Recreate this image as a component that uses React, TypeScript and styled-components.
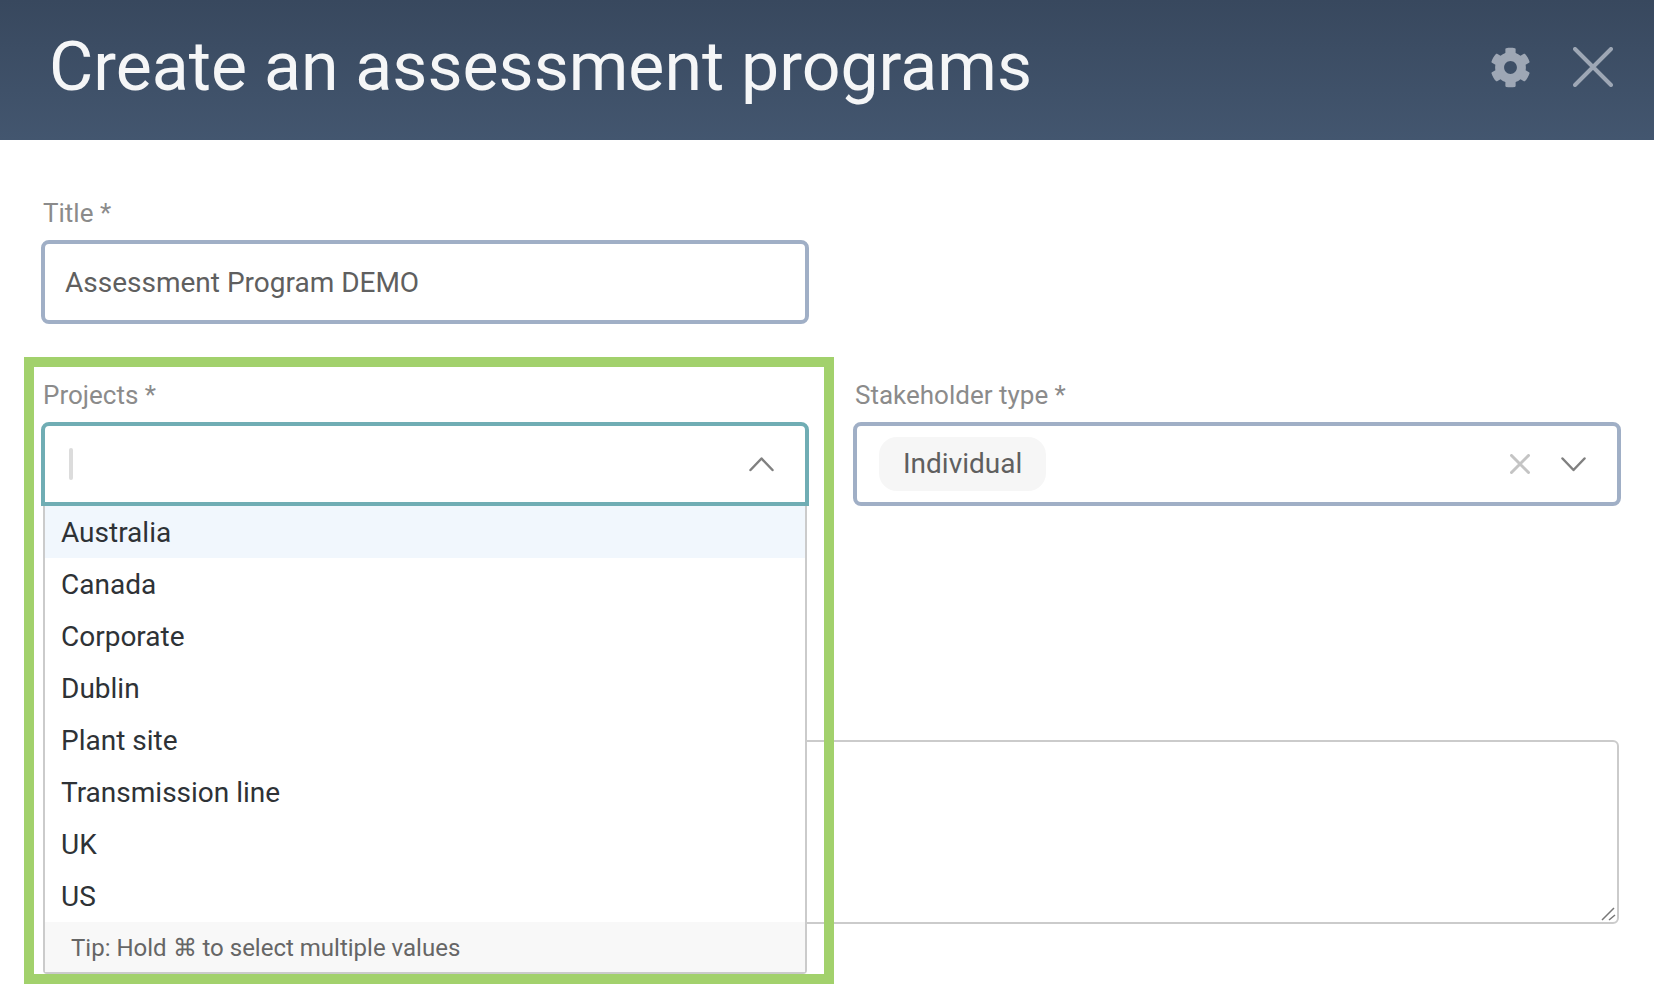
import React from "react";
import styled, { createGlobalStyle } from "styled-components";
import { FaCog } from "react-icons/fa";

const Global = createGlobalStyle`
  html, body { margin: 0; padding: 0; height: 100%; background: #fff; overflow: hidden; }
  * { box-sizing: border-box; }
  body { font-family: Roboto, "Liberation Sans", sans-serif; }
`;

const Page = styled.div`
  position: relative;
  width: 1654px;
  height: 984px;
  overflow: hidden;
  background: #fff;
`;

const Header = styled.header`
  height: 140px;
  padding: 0 41px 0 49px;
  display: flex;
  align-items: center;
  justify-content: space-between;
  background: linear-gradient(180deg, #38485e 0%, #43566f 100%);
`;

const Heading = styled.h1`
  margin: 0;
  font-size: 68px;
  font-weight: 400;
  line-height: 1;
  color: #f5f6f7;
  transform: translateY(-3px);
`;

const HeaderIcons = styled.div`
  display: flex;
  align-items: center;
  gap: 42px;
  color: #9ea7b5;
  transform: translateY(-3px);
`;

const Form = styled.main`
  padding: 58px 33px 0 41px;
  display: flex;
  flex-direction: column;
`;

const Row = styled.div`
  display: grid;
  grid-template-columns: 768px 768px;
  column-gap: 44px;
  margin-top: 56px;
`;

const Field = styled.div`
  position: relative;
  width: 768px;
`;

const Label = styled.label`
  display: block;
  padding-left: 2px;
  font-size: 26px;
  line-height: 30px;
  height: 42px;
  color: #8b8b8b;
`;

const TextInput = styled.input`
  display: block;
  width: 100%;
  height: 84px;
  padding: 0 20px;
  border: 4px solid #a0afc6;
  border-radius: 8px;
  outline: none;
  background: #fff;
  font: 400 28px Roboto, sans-serif;
  color: #5f5f5f;
`;

const Control = styled.div<{ $open?: boolean }>`
  height: 84px;
  display: flex;
  align-items: center;
  padding: 0 31px 0 22px;
  background: #fff;
  border: 4px solid ${(p) => (p.$open ? "#70adb4" : "#a0afc6")};
  border-radius: ${(p) => (p.$open ? "8px 8px 0 0" : "8px")};
`;

const Caret = styled.span`
  width: 4px;
  height: 32px;
  margin-left: 2px;
  border-radius: 2px;
  background: #dcdcdc;
`;

const Chip = styled.span`
  height: 54px;
  display: flex;
  align-items: center;
  padding: 0 24px 2px 24px;
  border-radius: 18px;
  background: #f6f6f6;
  font-size: 28px;
  color: #5f5f5f;
`;

const Spacer = styled.span`
  flex: 1;
`;

const ClearSlot = styled.span`
  display: flex;
  margin-right: 31px;
`;

const Menu = styled.div`
  position: absolute;
  top: 126px;
  left: 2px;
  right: 2px;
  z-index: 2;
  background: #fff;
  border: 2px solid #cbcbcb;
  border-top: 0;
  border-radius: 0 0 4px 4px;
`;

const Option = styled.div<{ $active?: boolean }>`
  height: 52px;
  display: flex;
  align-items: center;
  padding-left: 16px;
  font-size: 28px;
  color: #2e3236;
  background: ${(p) => (p.$active ? "#f1f7fd" : "#fff")};
`;

const Tip = styled.div`
  height: 50px;
  display: flex;
  align-items: center;
  padding: 2px 0 0 26px;
  font-size: 24px;
  color: #666;
  background: #f8f8f8;
`;

const NotesBox = styled.div`
  position: relative;
  width: 1558px;
  height: 184px;
  margin: 234px 0 0 20px;
`;

const Notes = styled.textarea`
  display: block;
  width: 100%;
  height: 100%;
  border: 2px solid #cbcbcb;
  border-radius: 6px;
  outline: none;
  background: #fff;
  resize: none;
`;

const ResizeGrip = styled.svg`
  position: absolute;
  right: 2px;
  bottom: 3px;
`;

const Highlight = styled.div`
  position: absolute;
  left: 24px;
  top: 357px;
  width: 810px;
  height: 627px;
  border: 10px solid #a2d16c;
  z-index: 3;
  pointer-events: none;
`;

const Cross = ({ size, color, width }: { size: number; color: string; width: number }) => (
  <svg width={size} height={size} viewBox={`0 0 ${size} ${size}`} fill="none" stroke={color} strokeWidth={width} strokeLinecap="round">
    <path d={`M${width / 2} ${width / 2}L${size - width / 2} ${size - width / 2}M${size - width / 2} ${width / 2}L${width / 2} ${size - width / 2}`} />
  </svg>
);

const Chevron = ({ up }: { up?: boolean }) => (
  <svg width="25" height="15" viewBox="0 0 25 15" fill="none" stroke="#808080" strokeWidth="2.5" strokeLinecap="round" strokeLinejoin="round">
    <path d={up ? "M1.5 13L12.5 1.5L23.5 13" : "M1.5 1.5L12.5 13L23.5 1.5"} />
  </svg>
);

const options = ["Australia", "Canada", "Corporate", "Dublin", "Plant site", "Transmission line", "UK", "US"];

export default function App() {
  return (
    <Page>
      <Global />
      <Header>
        <Heading>Create an assessment programs</Heading>
        <HeaderIcons>
          <FaCog size={41} />
          <Cross size={40} color="#9ea7b5" width={4} />
        </HeaderIcons>
      </Header>
      <Form>
        <Field>
          <Label>Title *</Label>
          <TextInput defaultValue="Assessment Program DEMO" />
        </Field>
        <Row>
          <Field>
            <Label>Projects *</Label>
            <Control $open>
              <Caret />
              <Spacer />
              <Chevron up />
            </Control>
            <Menu>
              {options.map((o, i) => (
                <Option key={o} $active={i === 0}>{o}</Option>
              ))}
              <Tip>Tip: Hold ⌘ to select multiple values</Tip>
            </Menu>
          </Field>
          <Field>
            <Label>Stakeholder type *</Label>
            <Control>
              <Chip>Individual</Chip>
              <Spacer />
              <ClearSlot>
                <Cross size={20} color="#c4c4c4" width={3} />
              </ClearSlot>
              <Chevron />
            </Control>
          </Field>
        </Row>
        <NotesBox>
          <Notes />
          <ResizeGrip width="16" height="14" viewBox="0 0 16 14" fill="none" stroke="#777" strokeWidth="1.5">
            <path d="M1 13L13 1M8 13L14 8" />
          </ResizeGrip>
        </NotesBox>
      </Form>
      <Highlight />
    </Page>
  );
}
